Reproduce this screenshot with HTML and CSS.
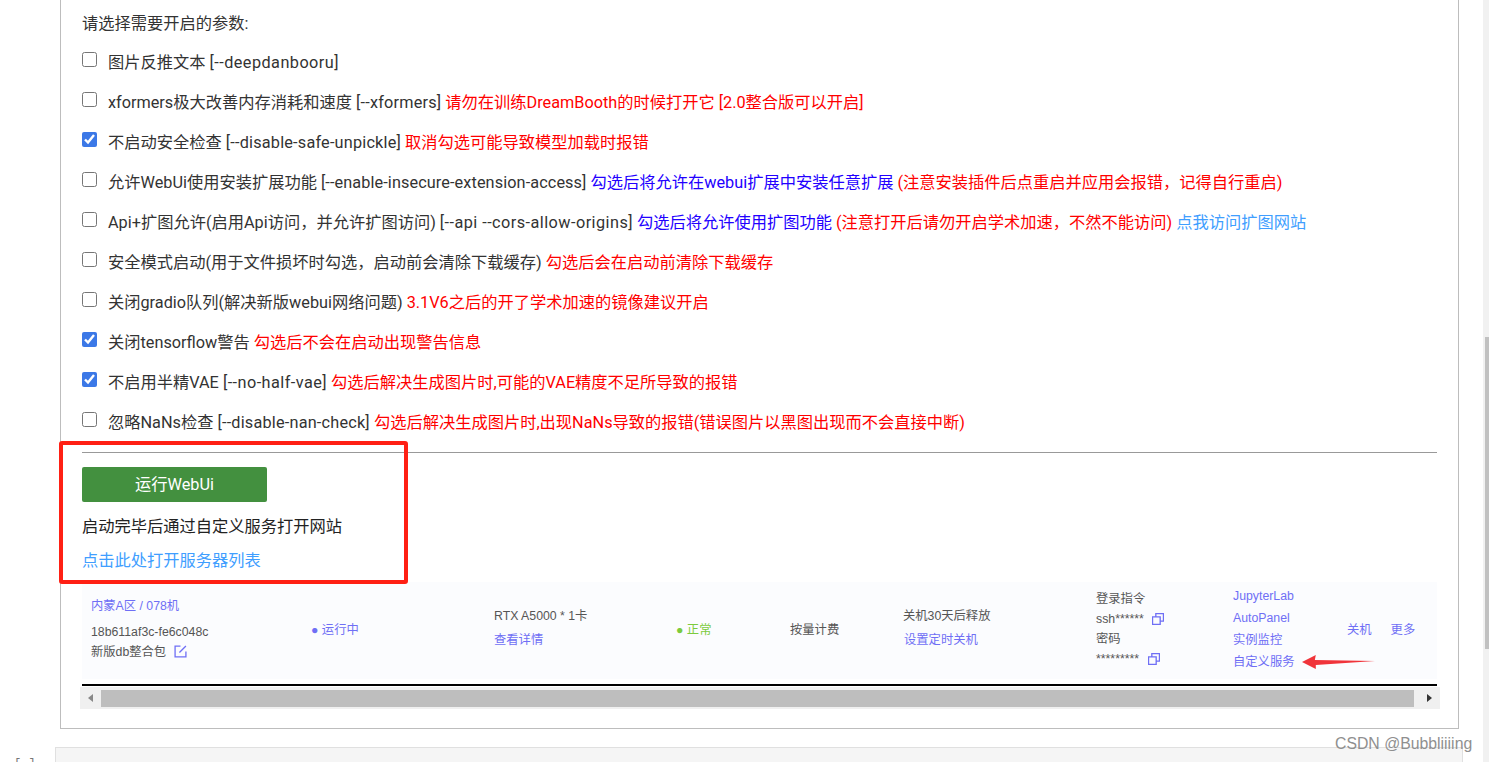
FILE: index.html
```html
<!DOCTYPE html>
<html lang="zh-CN">
<head>
    <meta charset="UTF-8">
    <title>WebUi</title>
    <link rel="stylesheet" href="styles.css">
</head>
<body>
    <div class="page">
        <div class="output">
            <p class="lead">请选择需要开启的参数:</p>

            <label class="opt"><input type="checkbox"><span>图片反推文本 <code class="flag wide">[--deepdanbooru]</code></span></label>
            <label class="opt"><input type="checkbox"><span>xformers极大改善内存消耗和速度 <code class="flag">[--xformers]</code> <em class="red">请勿在训练DreamBooth的时候打开它 [2.0整合版可以开启]</em></span></label>
            <label class="opt"><input type="checkbox" checked><span>不启动安全检查 <code class="flag">[--disable-safe-unpickle]</code> <em class="red">取消勾选可能导致模型加载时报错</em></span></label>
            <label class="opt"><input type="checkbox"><span>允许WebUi使用安装扩展功能 <code class="flag tight">[--enable-insecure-extension-access]</code> <em class="blue">勾选后将允许在webui扩展中安装任意扩展</em> <em class="red">(注意安装插件后点重启并应用会报错，记得自行重启)</em></span></label>
            <label class="opt"><input type="checkbox"><span>Api+扩图允许(启用Api访问，并允许扩图访问) <code class="flag wide">[--api --cors-allow-origins]</code> <em class="blue">勾选后将允许使用扩图功能</em> <em class="red">(注意打开后请勿开启学术加速，不然不能访问)</em> <a class="link" href="#">点我访问扩图网站</a></span></label>
            <label class="opt"><input type="checkbox"><span>安全模式启动(用于文件损坏时勾选，启动前会清除下载缓存) <em class="red">勾选后会在启动前清除下载缓存</em></span></label>
            <label class="opt"><input type="checkbox"><span>关闭gradio队列(解决新版webui网络问题) <em class="red">3.1V6之后的开了学术加速的镜像建议开启</em></span></label>
            <label class="opt"><input type="checkbox" checked><span>关闭tensorflow警告 <em class="red">勾选后不会在启动出现警告信息</em></span></label>
            <label class="opt"><input type="checkbox" checked><span>不启用半精VAE <code class="flag wide">[--no-half-vae]</code> <em class="red">勾选后解决生成图片时,可能的VAE精度不足所导致的报错</em></span></label>
            <label class="opt"><input type="checkbox"><span>忽略NaNs检查 <code class="flag">[--disable-nan-check]</code> <em class="red">勾选后解决生成图片时,出现NaNs导致的报错(错误图片以黑图出现而不会直接中断)</em></span></label>

            <hr class="rule">

            <button class="run" type="button">运行WebUi</button>
            <p class="hint">启动完毕后通过自定义服务打开网站</p>
            <p class="server"><a class="link" href="#">点击此处打开服务器列表</a></p>

            <div class="shot">
                <div class="row">
                    <div class="col c-name">
                        <div class="tag">内蒙A区 / 078机</div>
                        <div class="mid">18b611af3c-fe6c048c</div>
                        <div>新版db整合包 <svg class="ico edit" viewBox="1 1 12 12"><path d="M7 2H2v10h10V7M6 8l6-6"/></svg></div>
                    </div>
                    <div class="col c-state"><span class="tag">● 运行中</span></div>
                    <div class="col c-gpu">
                        <div>RTX A5000 * 1卡</div>
                        <div class="tag lower">查看详情</div>
                    </div>
                    <div class="col c-ok"><span class="ok">● 正常</span></div>
                    <div class="col c-pay">按量计费</div>
                    <div class="col c-off">
                        <div>关机30天后释放</div>
                        <div class="tag lower">设置定时关机</div>
                    </div>
                    <div class="col c-login">
                        <div>登录指令</div>
                        <div>ssh****** <svg class="ico copy" viewBox="0.5 0.5 11 11"><path d="M1 4h7v7H1zM4 4V1h7v7H8"/></svg></div>
                        <div>密码</div>
                        <div>********* <svg class="ico copy" viewBox="0.5 0.5 11 11"><path d="M1 4h7v7H1zM4 4V1h7v7H8"/></svg></div>
                    </div>
                    <div class="col c-tools tag">
                        <div>JupyterLab</div>
                        <div>AutoPanel</div>
                        <div>实例监控</div>
                        <div>自定义服务</div>
                    </div>
                    <div class="col c-act tag"><span>关机</span><span>更多</span></div>
                </div>
            </div>

            <div class="hbar">
                <span class="arrow-l"></span>
                <div class="hthumb"></div>
                <span class="arrow-r"></span>
            </div>
        </div>
        <div class="next">
            <span class="prompt">[ ]</span>
            <div class="cell"></div>
        </div>
    </div>

    <div class="vbar"><div class="vthumb"></div></div>

    <div class="mark-box"></div>
    <svg class="mark-arrow" viewBox="0 0 74 14"><path d="M0 7 L14 0 L13 5 L74 6 L14 10 L14 14 Z"/></svg>
    <div class="watermark">CSDN @Bubbliiiing</div>
</body>
</html>
```

FILE: styles.css
```css
html, body {
    height: 100%;
}
body {
    margin: 0;
    background: #fff;
    font-family: Roboto, "Noto Sans CJK SC", sans-serif;
    font-size: 16.25px;
    color: #333;
    overflow: hidden;
}
.page {
    margin-left: 55px;
    margin-right: 30px;
}
.output {
    box-sizing: border-box;
    height: 729px;
    margin-left: 5px;
    padding: 13px 21px 0 21px;
    border: 1px solid #bdbdbd;
    border-top: none;
}
.lead {
    margin: 0;
    line-height: 22px;
}
.opt {
    display: flex;
    align-items: flex-start;
    height: 40px;
    line-height: 24px;
}
.lead + .opt {
    margin-top: 15px;
}
.opt input {
    flex: none;
    width: 15px;
    height: 15px;
    margin: 2px 11px 0 0;
    accent-color: #3b78e7;
}
.opt span {
    white-space: nowrap;
    margin-top: 1px;
}
.opt em {
    font-style: normal;
}
.flag {
    font: inherit;
    letter-spacing: 0.2px;
}
.flag.wide {
    letter-spacing: 0.45px;
}
.flag.tight {
    letter-spacing: 0.1px;
}
.red {
    color: #f00;
}
.blue {
    color: #2200ff;
}
.link {
    color: #409eff;
    text-decoration: none;
}
.rule {
    margin: 2px 0 14px;
    border: none;
    border-top: 1px solid #999;
    width: 1355px;
}
.run {
    display: block;
    width: 185px;
    height: 35px;
    padding: 0 0 3px;
    border: none;
    border-radius: 2px;
    background: #43903f;
    color: #fff;
    font: inherit;
}
.hint {
    margin: 13px 0 0;
    line-height: 24px;
    color: #222;
}
.server {
    margin: 10px 0 0;
    line-height: 24px;
}
.shot {
    width: 1355px;
    height: 102px;
    margin-top: 9px;
    border-bottom: 2px solid #000;
    font-family: "Liberation Sans", "Noto Sans CJK SC", sans-serif;
    font-size: 12.3px;
    color: #555;
}
.row {
    box-sizing: border-box;
    display: flex;
    align-items: center;
    height: 97px;
    padding-bottom: 4px;
    background: #fbfcfe;
}
.col {
    box-sizing: border-box;
    flex: none;
}
.tag {
    color: #6f6ff5;
}
.lower {
    margin-top: 6px;
}
.c-name {
    width: 229px;
    padding-left: 9px;
    line-height: 20px;
}
.c-name .mid {
    margin-top: 6px;
}
.c-state {
    width: 183px;
}
.c-gpu {
    width: 182px;
    padding-bottom: 3px;
}
.c-ok {
    width: 114px;
}
.ok {
    color: #7ccb3d;
}
.c-pay {
    width: 113px;
}
.c-off {
    width: 193px;
    padding-bottom: 3px;
}
.c-off .lower {
    margin-left: 1px;
}
.c-login {
    width: 137px;
    line-height: 20px;
}
.c-tools {
    width: 114px;
    line-height: 22px;
}
.c-act {
    display: flex;
    gap: 19px;
}
.ico {
    width: 12px;
    height: 12px;
    margin-left: 5px;
    vertical-align: -2px;
    fill: none;
    stroke: #6f6ff5;
    stroke-width: 1.2;
}
.edit {
    width: 13px;
    height: 13px;
    margin-left: 4px;
}
.copy {
    margin-left: 5px;
}
.hbar {
    display: flex;
    width: 1360px;
    height: 22px;
    margin: 1px 0 0 -2px;
    background: #f0f0f0;
}
.hthumb {
    flex: 1;
    height: 17px;
    margin-top: 3px;
    background: #bebebe;
}
.arrow-l, .arrow-r {
    flex: none;
    position: relative;
    height: 22px;
}
.arrow-l {
    width: 21px;
}
.arrow-r {
    width: 26px;
}
.arrow-l::before, .arrow-r::before {
    content: "";
    position: absolute;
    top: 7px;
    border-top: 4px solid transparent;
    border-bottom: 4px solid transparent;
}
.arrow-l::before {
    left: 8px;
    border-right: 5px solid #888;
}
.arrow-r::before {
    left: 13px;
    border-left: 5px solid #333;
}
.next {
    display: flex;
    align-items: flex-start;
    height: 15px;
    margin-top: 18px;
    margin-left: -41px;
    margin-right: -4px;
}
.prompt {
    flex: none;
    width: 41px;
    padding-top: 10px;
    box-sizing: border-box;
    color: #777;
    font-size: 12px;
    line-height: 14px;
    font-family: "Liberation Mono", monospace;
}
.cell {
    flex: 1;
    box-sizing: border-box;
    height: 15px;
    background: #f5f5f5;
    border: 1px solid #e0e0e0;
    border-bottom: none;
}
.vbar {
    position: fixed;
    top: 0;
    right: 0;
    width: 6px;
    height: 100%;
    background: #f1f1f1;
}
.vthumb {
    position: absolute;
    top: 337px;
    left: 2px;
    width: 4px;
    height: 312px;
    background: #c1c1c1;
}
.mark-box {
    position: absolute;
    left: 59px;
    top: 441px;
    width: 349px;
    height: 143px;
    box-sizing: border-box;
    border: 4px solid #ff2014;
    border-radius: 3px;
}
.mark-arrow {
    position: absolute;
    left: 1302px;
    top: 655px;
    width: 73px;
    height: 14px;
    fill: #f0343a;
}
.watermark {
    position: absolute;
    left: 1335px;
    top: 735px;
    font-family: "Liberation Sans", sans-serif;
    font-size: 15.8px;
    color: #8f8f8f;
    white-space: nowrap;
}
```
